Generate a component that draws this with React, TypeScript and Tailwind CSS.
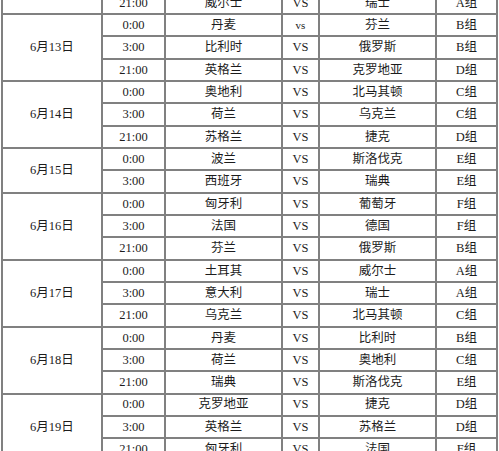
import React from "react";

type Match = [string, string, string, string, string];
type Day = { date: string; matches: Match[] };

const days: Day[] = [
  { date: "6月12日", matches: [["21:00", "威尔士", "VS", "瑞士", "A组"]] },
  {
    date: "6月13日",
    matches: [
      ["0:00", "丹麦", "vs", "芬兰", "B组"],
      ["3:00", "比利时", "VS", "俄罗斯", "B组"],
      ["21:00", "英格兰", "VS", "克罗地亚", "D组"],
    ],
  },
  {
    date: "6月14日",
    matches: [
      ["0:00", "奥地利", "VS", "北马其顿", "C组"],
      ["3:00", "荷兰", "VS", "乌克兰", "C组"],
      ["21:00", "苏格兰", "VS", "捷克", "D组"],
    ],
  },
  {
    date: "6月15日",
    matches: [
      ["0:00", "波兰", "VS", "斯洛伐克", "E组"],
      ["3:00", "西班牙", "VS", "瑞典", "E组"],
    ],
  },
  {
    date: "6月16日",
    matches: [
      ["0:00", "匈牙利", "VS", "葡萄牙", "F组"],
      ["3:00", "法国", "VS", "德国", "F组"],
      ["21:00", "芬兰", "VS", "俄罗斯", "B组"],
    ],
  },
  {
    date: "6月17日",
    matches: [
      ["0:00", "土耳其", "VS", "威尔士", "A组"],
      ["3:00", "意大利", "VS", "瑞士", "A组"],
      ["21:00", "乌克兰", "VS", "北马其顿", "C组"],
    ],
  },
  {
    date: "6月18日",
    matches: [
      ["0:00", "丹麦", "VS", "比利时", "B组"],
      ["3:00", "荷兰", "VS", "奥地利", "C组"],
      ["21:00", "瑞典", "VS", "斯洛伐克", "E组"],
    ],
  },
  {
    date: "6月19日",
    matches: [
      ["0:00", "克罗地亚", "VS", "捷克", "D组"],
      ["3:00", "英格兰", "VS", "苏格兰", "D组"],
      ["21:00", "匈牙利", "VS", "法国", "F组"],
    ],
  },
];

const cell = "bg-white flex items-center justify-center leading-none whitespace-nowrap";

function DateCell({ date, span, hidden }: { date: string; span: number; hidden?: boolean }) {
  const spanCls = span === 3 ? "row-span-3" : span === 2 ? "row-span-2" : "row-span-1";
  return <div className={`${cell} ${spanCls}`}>{hidden ? "" : date}</div>;
}

export default function App() {
  return (
    <div className="w-[499px] h-[451px] overflow-hidden bg-white">
      <div
        className="ml-[1px] mt-[-9.33px] w-[497px] grid grid-cols-[98px_61px_115px_35px_115px_59px] auto-rows-[20.33px] gap-[2px] p-[2px] bg-[#808080] text-[12.5px] text-[#1c1c1c]"
        style={{ fontFamily: '"Liberation Serif", "Noto Sans CJK SC", serif' }}
      >
        {days.map((d, i) => (
          <React.Fragment key={d.date}>
            <DateCell date={d.date} span={d.matches.length} hidden={i === 0} />
            {d.matches.map((m, j) => (
              <React.Fragment key={j}>
                <div className={cell}>{m[0]}</div>
                <div className={cell}>{m[1]}</div>
                <div className={`${cell} ${m[2] === "vs" ? "text-[11px]" : ""}`}>{m[2]}</div>
                <div className={cell}>{m[3]}</div>
                <div className={cell}>{m[4]}</div>
              </React.Fragment>
            ))}
          </React.Fragment>
        ))}
      </div>
    </div>
  );
}
